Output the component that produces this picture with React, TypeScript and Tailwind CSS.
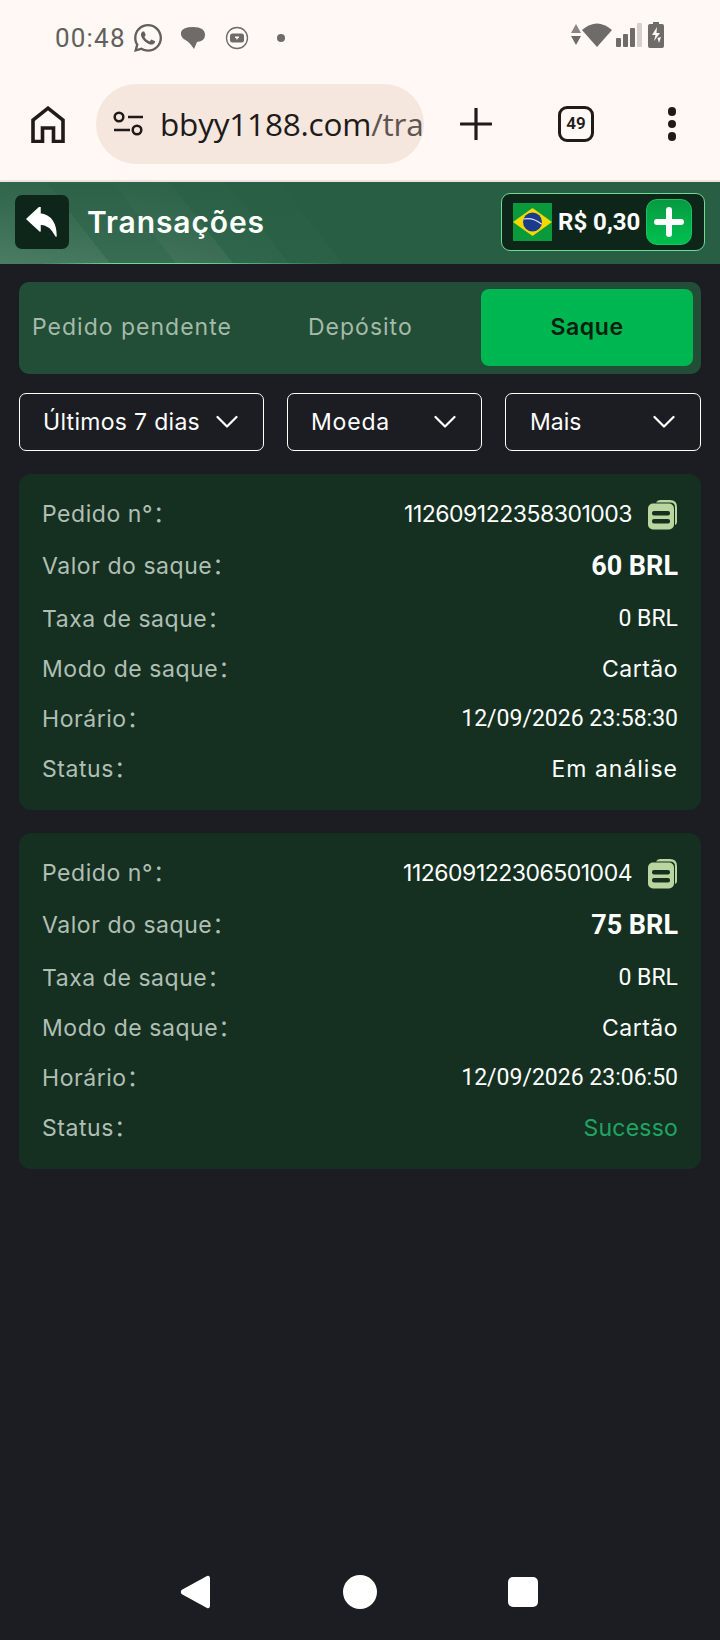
import React from "react";
import { FaWhatsapp } from "react-icons/fa";

const M = "font-['Inter','Noto_Sans_CJK_SC',sans-serif]";
const R = "font-['Roboto',sans-serif]";

function Chevron() {
  return (
    <svg width="22" height="14" viewBox="0 0 22 14" fill="none" className="shrink-0">
      <path d="M1.5 2 L11 11.5 L20.5 2" stroke="#fff" strokeWidth="2.2" strokeLinecap="round" strokeLinejoin="round" />
    </svg>
  );
}

function CopyIcon() {
  return (
    <svg width="30" height="31" viewBox="0 0 30 31" className="shrink-0">
      <path d="M8 3.5 Q9 1 12 1 H22 Q29 1 29 8 V23 Q29 25.5 27 26 V8 Q27 3.5 22 3.5 Z" fill="#b9d5a0" />
      <rect x="0" y="4.5" width="26" height="26" rx="5" fill="#b9d5a0" />
      <rect x="4" y="12" width="18" height="4.5" rx="2" fill="#16301f" />
      <rect x="4" y="20" width="18" height="4.5" rx="2" fill="#16301f" />
    </svg>
  );
}

function Row({ label, children, className = "" }: { label: string; children: React.ReactNode; className?: string }) {
  return (
    <div className={`flex items-center justify-between ${className}`}>
      <span className={`${M} text-[23px] tracking-[0.55px] whitespace-nowrap text-[#b0bfb4]`}>{label}：</span>
      {children}
    </div>
  );
}

function Card({ id, amount, time, status, statusClass }: { id: string; amount: string; time: string; status: string; statusClass: string }) {
  return (
    <div className="flex h-[336px] flex-col rounded-[12px] bg-[#153021] px-[23px] pt-[24px]">
      <Row label="Pedido n°" className="h-[32px]">
        <div className="flex items-center gap-[16px]">
          <span className={`${M} text-[23px] tracking-[-0.5px] text-white`}>{id}</span>
          <CopyIcon />
        </div>
      </Row>
      <Row label="Valor do saque" className="mt-[20px] h-[32px]">
        <span className={`${R} text-[27px] font-bold text-white`}>{amount}</span>
      </Row>
      <Row label="Taxa de saque" className="mt-[21px] h-[32px]">
        <span className={`${R} text-[23px] text-white`}>0 BRL</span>
      </Row>
      <Row label="Modo de saque" className="mt-[18px] h-[32px]">
        <span className={`${M} text-[23px] tracking-[0.5px] text-white`}>Cartão</span>
      </Row>
      <Row label="Horário" className="mt-[18px] h-[32px]">
        <span className={`${R} text-[23px] text-white`}>{time}</span>
      </Row>
      <Row label="Status" className="mt-[18px] h-[32px]">
        <span className={`${M} text-[23px] ${statusClass}`}>{status}</span>
      </Row>
    </div>
  );
}

export default function App() {
  return (
    <div className="flex h-[1640px] w-[720px] flex-col overflow-hidden bg-[#1c1d22]">
      {/* Status bar */}
      <div className="flex h-[72px] shrink-0 items-start justify-between bg-[#fff8f5] pt-[22px] pr-[56px] pl-[55px] text-[#625f5d]">
        <div className="flex items-center">
          <span className={`${R} text-[26px] leading-[30px] tracking-[1.2px]`}>00:48</span>
          <FaWhatsapp className="ml-[6px] h-[32px] w-[32px]" />
          <svg width="26" height="24" viewBox="0 0 26 24" className="ml-[16px]">
            <path d="M1 6 Q3 1 13 1 Q25 1 25 9 Q25 15 17 16 L14 23 Q10 17 7 15 Q0 12 1 6 Z" fill="#6e6b69" />
          </svg>
          <svg width="24" height="24" viewBox="0 0 24 24" className="ml-[19px]">
            <circle cx="12" cy="12" r="10.5" fill="none" stroke="#6e6b69" strokeWidth="1.3" />
            <rect x="5" y="7.5" width="14" height="9" rx="2.5" fill="#6e6b69" />
            <path d="M10 10.5 H14 V12 H13 L12 14 L11 12 H10 Z" fill="#fff8f5" />
          </svg>
          <span className="ml-[28px] h-[8px] w-[8px] rounded-full bg-[#6e6b69]" />
        </div>
        <div className="flex items-center">
          <svg width="10" height="22" viewBox="0 0 10 22" className="mr-[1px]">
            <path d="M5 0 L10 9 H0 Z" fill="#8a8684" />
            <path d="M0 12 H10 L5 21 Z" fill="#6e6b69" />
          </svg>
          <svg width="30" height="26" viewBox="0 0 30 26">
            <path d="M0 8 Q15 -5 30 8 L15 25 Z" fill="#6e6b69" />
          </svg>
          <svg width="26" height="25" viewBox="0 0 26 25" className="ml-[4px]">
            <rect x="0" y="15" width="5" height="9" rx="1" fill="#6e6b69" />
            <rect x="7" y="11" width="5" height="13" rx="1" fill="#6e6b69" />
            <rect x="14" y="5" width="5" height="19" rx="1" fill="#6e6b69" />
            <rect x="21" y="0" width="5" height="24" rx="1" fill="#d4d0cd" />
          </svg>
          <svg width="16" height="26" viewBox="0 0 16 26" className="ml-[6px]">
            <path d="M5 0 H11 V2 H14 Q16 2 16 4 V24 Q16 26 14 26 H2 Q0 26 0 24 V4 Q0 2 2 2 H5 Z" fill="#6e6b69" />
            <path d="M9 5 L4 13 H7.5 L6 19 L12 11 H8.5 Z M9.5 16 L11 21 L13 15" fill="#fff8f5" />
          </svg>
        </div>
      </div>

      {/* Browser bar */}
      <div className="flex h-[108px] shrink-0 items-start bg-[#fff8f5] pt-[12px]">
        <div className="flex h-[80px] w-[96px] items-center justify-center">
          <svg width="34" height="37" viewBox="0 0 34 37" fill="none">
            <path d="M2 35.5 V14 L17 2.2 L32 14 V35.5 H22.5 V22 H11.5 V35.5 Z" stroke="#201a18" strokeWidth="3.6" />
          </svg>
        </div>
        <div className="flex h-[80px] w-[328px] shrink-0 items-center overflow-hidden rounded-[40px] bg-[#f5e6de] pl-[17px]">
          <svg width="32" height="26" viewBox="0 0 32 26" fill="none" className="shrink-0">
            <circle cx="6" cy="6" r="4.3" stroke="#201a18" strokeWidth="2.5" />
            <path d="M15 6 H30 M1 19 H17" stroke="#201a18" strokeWidth="2.5" />
            <circle cx="24" cy="19" r="4.3" stroke="#201a18" strokeWidth="2.5" />
          </svg>
          <span className="ml-[15px] font-['Open_Sans',sans-serif] text-[31.5px] tracking-[-0.2px] whitespace-nowrap text-[#201a18]">
            bbyy1188.com<span className="text-[#5f5550]">/tra</span>
          </span>
        </div>
        <div className="flex h-[80px] w-[104px] items-center justify-center">
          <svg width="32" height="32" viewBox="0 0 32 32">
            <path d="M16 1 V31 M1 16 H31" stroke="#201a18" strokeWidth="3.2" strokeLinecap="round" />
          </svg>
        </div>
        <div className="flex h-[80px] w-[96px] items-center justify-center">
          <div className={`${R} flex h-[36px] w-[36px] items-center justify-center rounded-[9px] border-[3.5px] border-[#201a18] text-[17px] font-semibold text-[#201a18]`}>49</div>
        </div>
        <div className="flex h-[80px] flex-1 flex-col items-center justify-center gap-[4px]">
          <span className="h-[8.5px] w-[8.5px] rounded-full bg-[#201a18]" />
          <span className="h-[8.5px] w-[8.5px] rounded-full bg-[#201a18]" />
          <span className="h-[8.5px] w-[8.5px] rounded-full bg-[#201a18]" />
        </div>
      </div>

      {/* Page header */}
      <div className="relative flex h-[84px] shrink-0 items-center justify-between border-t-2 border-[#f0e2da] bg-[linear-gradient(180deg,rgba(40,94,67,0.75),rgba(40,94,67,0)),linear-gradient(52deg,#4a7d63_0,#44775e_87px,#386c53_87px,#386c53_139px,#407359_139px,#3c6f56_184px,#30674c_184px,#2f664b_228px,#2b6247_228px,#2b6247_270px,#285e43_270px)] pr-[15px] pb-[2px] pl-[15px]">
        <div className="flex items-center">
          <div className="flex h-[54px] w-[54px] items-center justify-center rounded-[7px] bg-[#0e261a]">
            <svg width="32" height="30" viewBox="0 0 32 30">
              <path d="M14 0 L1 12 L14 24 V17 C21 17 26 21 30 29 C30 17 25 8 14 7 Z" fill="#fff" stroke="#fff" strokeLinejoin="round" strokeWidth="1.5" />
            </svg>
          </div>
          <span className={`${M} ml-[18px] text-[30px] font-semibold tracking-[0.9px] text-white`}>Transações</span>
        </div>
        <div className="flex h-[58px] w-[204px] items-center rounded-[9px] border border-[#6fdc95] bg-[#0e261a] pl-[11px]">
          <svg width="39" height="38" viewBox="0 0 39 38" className="shrink-0">
            <rect width="39" height="38" fill="#0a9a3c" />
            <path d="M0 19 L19.5 5 L39 19 L19.5 33 Z" fill="#f7d900" />
            <circle cx="19.5" cy="19" r="9.5" fill="#1b3a8c" />
            <path d="M10.5 16 Q20 14 28.5 21" stroke="#d8e6f0" strokeWidth="1.2" fill="none" />
          </svg>
          <span className={`${R} ml-[6px] w-[81px] text-[24px] font-bold whitespace-nowrap text-white`}>R$ 0,30</span>
          <div className="ml-[7px] flex h-[46px] w-[46px] shrink-0 items-center justify-center rounded-[11px] border border-[#12c95d] bg-[linear-gradient(180deg,#079a41,#00c04f)]">
            <svg width="30" height="30" viewBox="0 0 30 30">
              <path d="M15 3 V27 M3 15 H27" stroke="#fff" strokeWidth="6" strokeLinecap="round" />
            </svg>
          </div>
        </div>
        <div className="absolute bottom-0 left-[40px] h-[1px] w-[300px] bg-[linear-gradient(90deg,transparent,#6fdc95_25%,#6fdc95_50%,transparent)]" />
      </div>

      {/* Body */}
      <div className="flex flex-col px-[19px] pt-[18px]">
        <div className="flex h-[92px] items-start rounded-[10px] bg-[#224d36] pt-[7px] pr-[8px] pl-[13px]">
          <span className={`${M} flex h-[77px] w-[276px] items-center text-[23px] tracking-[1px] whitespace-nowrap text-[#a5bbaa]`}>Pedido pendente</span>
          <span className={`${M} flex h-[77px] flex-1 items-center text-[23px] tracking-[1px] text-[#a5bbaa]`}>Depósito</span>
          <div className={`${M} flex h-[77px] w-[212px] items-center justify-center rounded-[8px] bg-[#00b651] text-[23px] font-semibold tracking-[0.6px] text-[#062010]`}>Saque</div>
        </div>

        <div className="mt-[19px] flex gap-[23px]">
          <div className="flex h-[58px] w-[245px] items-center rounded-[7px] border border-white pr-[25px] pl-[23px]">
            <span className={`${M} flex-1 text-[23px] tracking-[0.3px] whitespace-nowrap text-white`}>Últimos 7 dias</span>
            <Chevron />
          </div>
          <div className="flex h-[58px] w-[195px] items-center rounded-[7px] border border-white pr-[25px] pl-[23px]">
            <span className={`${M} flex-1 text-[23px] tracking-[0.8px] text-white`}>Moeda</span>
            <Chevron />
          </div>
          <div className="flex h-[58px] flex-1 items-center rounded-[7px] border border-white pr-[25px] pl-[24px]">
            <span className={`${M} flex-1 text-[23px] text-white`}>Mais</span>
            <Chevron />
          </div>
        </div>

        <div className="mt-[23px] flex flex-col gap-[23px]">
          <Card id="112609122358301003" amount="60 BRL" time="12/09/2026 23:58:30" status="Em análise" statusClass="tracking-[1px] text-white" />
          <Card id="112609122306501004" amount="75 BRL" time="12/09/2026 23:06:50" status="Sucesso" statusClass="tracking-[0.2px] text-[#1fa463]" />
        </div>
      </div>

      {/* Android nav */}
      <div className="mt-auto flex h-[100px] shrink-0 items-start bg-[#1c1d22] pt-[35px] pl-[180px]">
        <svg width="30" height="34" viewBox="0 0 30 34">
          <path d="M27 1 Q30 0 30 4 V30 Q30 34 27 33 L1.5 19 Q0 17 1.5 15 Z" fill="#fff" />
        </svg>
        <span className="ml-[133px] h-[34px] w-[34px] rounded-full bg-white" />
        <span className="mt-[2px] ml-[131px] h-[30px] w-[30px] rounded-[5px] bg-white" />
      </div>
    </div>
  );
}
